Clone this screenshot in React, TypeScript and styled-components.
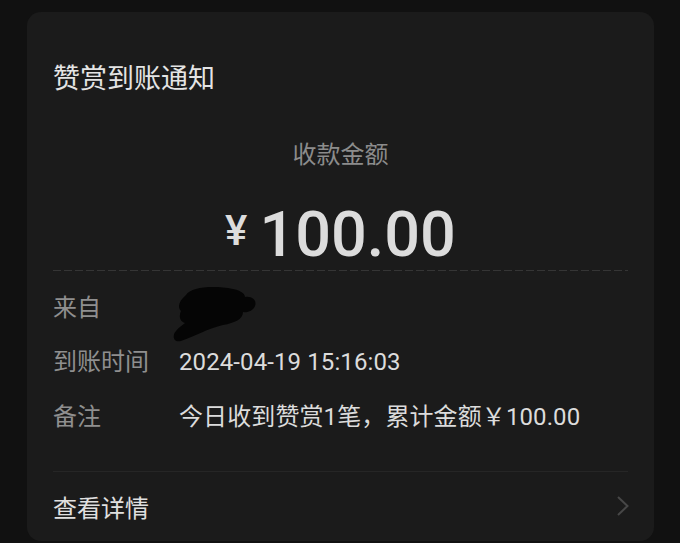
import styled, { createGlobalStyle } from "styled-components";

const GlobalStyle = createGlobalStyle`
  html, body {
    margin: 0;
    padding: 0;
    background: #111111;
  }
  body {
    font-family: Roboto, "Noto Sans CJK SC", sans-serif;
  }
`;

const Page = styled.div`
  width: 680px;
  height: 543px;
  padding: 12px 26px 0 27px;
  box-sizing: border-box;
  overflow: hidden;
`;

const Card = styled.div`
  height: 529px;
  background: #1b1b1b;
  border-radius: 14px;
  padding: 0 26px;
  box-sizing: border-box;
  display: flex;
  flex-direction: column;
`;

const Title = styled.div`
  margin-top: 49px;
  font-size: 27px;
  line-height: 36px;
  color: #e4e4e4;
`;

const AmountLabel = styled.div`
  margin-top: 42px;
  text-align: center;
  font-size: 24px;
  line-height: 32px;
  color: #8c8c8c;
`;

const Amount = styled.div`
  margin-top: 25px;
  text-align: center;
  font-family: Roboto, sans-serif;
  font-size: 63px;
  font-weight: 500;
  line-height: 70px;
  color: #dcdcdc;
`;

const Yen = styled.span`
  font-size: 42px;
  vertical-align: 11px;
  margin-right: 12px;
`;

const Dashed = styled.div`
  height: 1px;
  background: repeating-linear-gradient(
    to right,
    #353535 0 8px,
    transparent 8px 11px
  );
`;

const Rows = styled.div`
  margin-top: 21px;
  display: flex;
  flex-direction: column;
  gap: 22.5px;
`;

const Row = styled.div`
  display: grid;
  grid-template-columns: 126px 1fr;
  font-size: 24px;
  line-height: 32px;
`;

const Label = styled.div`
  color: #8f8f8f;
`;

const Value = styled.div`
  position: relative;
  color: #dcdcdc;
  white-space: nowrap;
  letter-spacing: 0.1px;
`;

const Blob = styled.svg`
  position: absolute;
  left: -7px;
  top: -6px;
`;

const Divider = styled.div`
  margin-top: 38px;
  height: 1px;
  background: #262626;
`;

const Footer = styled.div`
  height: 72px;
  display: flex;
  align-items: center;
  justify-content: space-between;
  font-size: 24px;
  color: #e0e0e0;
`;

const Chevron = styled.svg`
  margin-right: -2px;
`;

const rows = [
  { label: "到账时间", value: "2024-04-19 15:16:03" },
  { label: "备注", value: "今日收到赞赏1笔，累计金额￥100.00" },
];

export default function App() {
  return (
    <>
      <GlobalStyle />
      <Page>
        <Card>
          <Title>赞赏到账通知</Title>
          <AmountLabel>收款金额</AmountLabel>
          <Amount>
            <Yen>¥</Yen>100.00
          </Amount>
          <Dashed />
          <Rows>
            <Row>
              <Label>来自</Label>
              <Value>
                <Blob width="86" height="58" viewBox="-1 -1 86 58">
                  <path
                    d="M13 8 C18 0 40 -2 60 2 C70 4 72 8 72 10 C80 9 84 14 82 19 C80 24 74 26 70 25 C70 32 62 36 50 38 C36 41 20 50 8 54 C0 56 -1 48 3 44 C6 40 10 38 12 36 C6 34 6 28 8 24 C4 20 6 14 13 8 Z"
                    fill="#050505"
                  />
                </Blob>
              </Value>
            </Row>
            {rows.map((r) => (
              <Row key={r.label}>
                <Label>{r.label}</Label>
                <Value>{r.value}</Value>
              </Row>
            ))}
          </Rows>
          <Divider />
          <Footer>
            <span>查看详情</span>
            <Chevron width="14" height="22" viewBox="0 0 14 22">
              <path d="M2 2 L11.5 11 L2 20" fill="none" stroke="#474747" strokeWidth="2" />
            </Chevron>
          </Footer>
        </Card>
      </Page>
    </>
  );
}
